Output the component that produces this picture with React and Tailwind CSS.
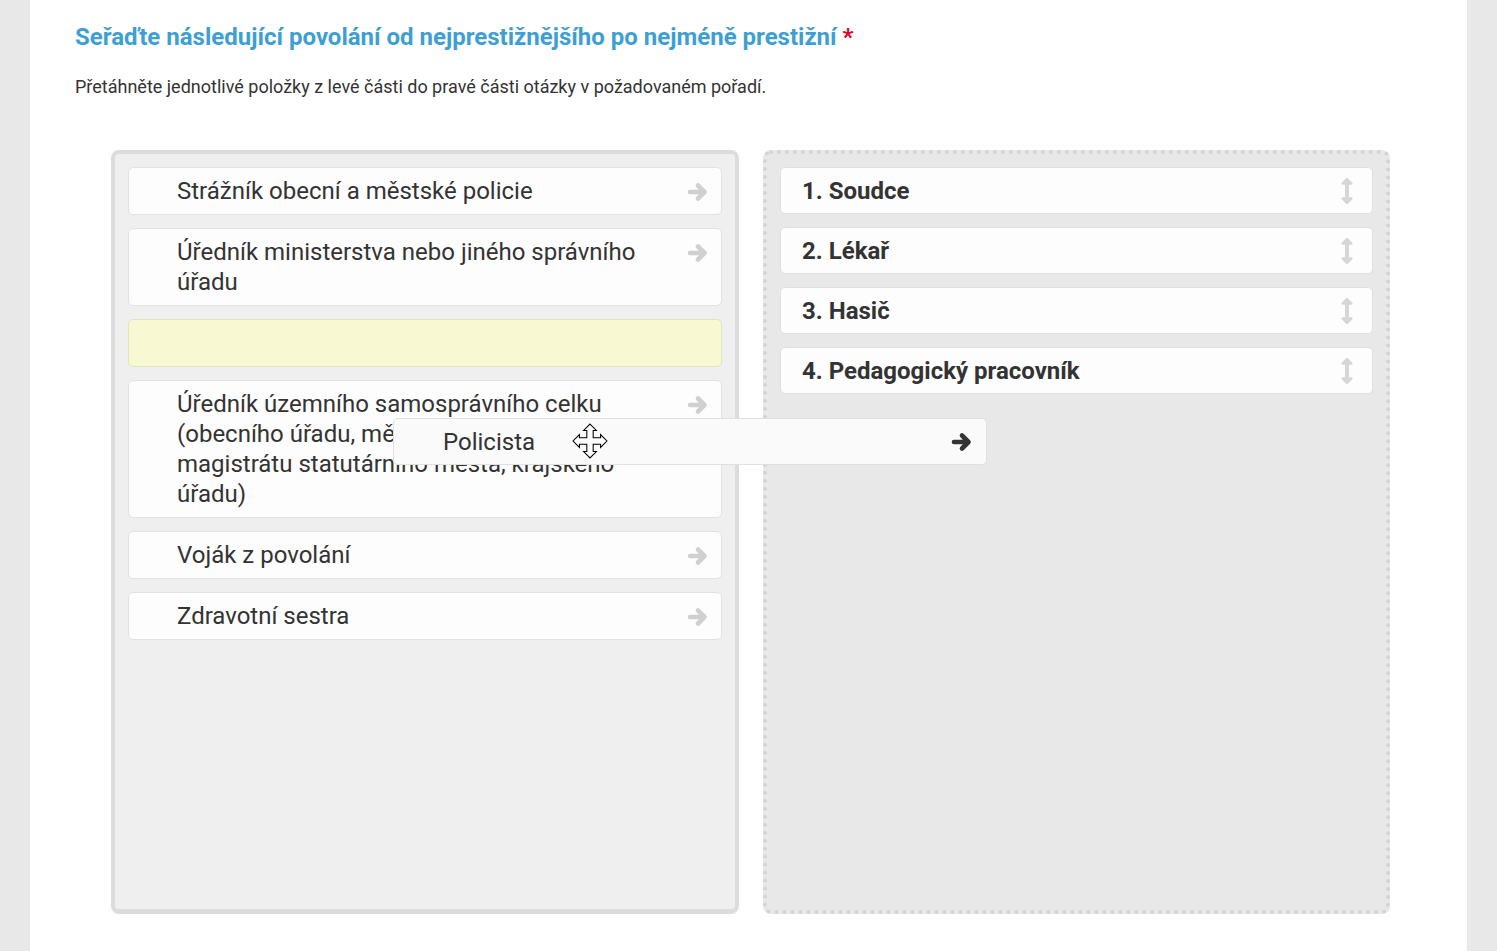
import React from 'react'
import { FaArrowsAltV } from 'react-icons/fa'

const leftItems = [
  'Strážník obecní a městské policie',
  'Úředník ministerstva nebo jiného správního úřadu',
  null,
  'Úředník územního samosprávního celku (obecního úřadu, městského úřadu, magistrátu statutárního města, krajského úřadu)',
  'Voják z povolání',
  'Zdravotní sestra',
]

const rightItems = ['1. Soudce', '2. Lékař', '3. Hasič', '4. Pedagogický pracovník']

function Arrow({ className }) {
  return (
    <svg width="22" height="20" viewBox="0 0 22 20" className={className}>
      <path d="M3 10 H17 M11 3.5 L17.5 10 L11 16.5" fill="none" stroke="currentColor" strokeWidth="4.6" strokeLinecap="round" strokeLinejoin="round" />
    </svg>
  )
}

function MoveCursor() {
  return (
    <svg width="36" height="36" viewBox="0 0 34 34" className="absolute left-[572px] top-[423px]">
      <path
        d="M17 1 L23 7 L20 7 L20 14 L27 14 L27 11 L33 17 L27 23 L27 20 L20 20 L20 27 L23 27 L17 33 L11 27 L14 27 L14 20 L7 20 L7 23 L1 17 L7 11 L7 14 L14 14 L14 7 L11 7 Z"
        fill="#fff"
        stroke="#000"
        strokeWidth="1"
      />
    </svg>
  )
}

function App() {
  return (
    <div className="relative min-h-screen bg-[#e8e8e8] font-['Roboto',sans-serif]">
      <div className="relative mx-[30px] min-h-[951px] bg-white px-[45px] pt-[21px]">
        <h1 className="text-[24px] font-bold leading-[32px] text-[#3d9fd3]">
          Seřaďte následující povolání od nejprestižnějšího po nejméně prestižní{' '}
          <span className="text-[#e4002b]">*</span>
        </h1>
        <p className="mt-[23px] text-[18px] leading-[22px] text-[#333]">
          Přetáhněte jednotlivé položky z levé části do pravé části otázky v požadovaném pořadí.
        </p>

        <div className="mt-[52px] ml-[36px] flex gap-[24px]">
          {/* source list */}
          <div className="flex h-[764px] w-[628px] flex-col gap-[13px] rounded-[8px] border-4 border-b-[5px] border-[#dcdcdc] bg-[#efefef] p-[13px]">
            {leftItems.map((text, i) =>
              text ? (
                <div
                  key={i}
                  className="flex items-start justify-between rounded-[5px] border border-[#e2e2e2] bg-[#fdfdfd] py-2 pl-[48px] pr-[12px] text-[24px] leading-[30px] text-[#333]"
                >
                  <span className="pr-8">{text}</span>
                  <Arrow className="mt-[6px] shrink-0 text-[#d0d0d0]" />
                </div>
              ) : (
                <div key={i} className="h-[48px] rounded-[5px] border border-[#e3e3c0] bg-[#f8f8d2]" />
              )
            )}
          </div>

          {/* ordered list */}
          <div className="flex h-[764px] w-[627px] flex-col gap-[13px] rounded-[8px] border-4 border-dotted border-[#d4d4d4] bg-[#e8e8e8] p-[13px]">
            {rightItems.map((text) => (
              <div
                key={text}
                className="flex items-center justify-between rounded-[5px] border border-[#e0e0e0] bg-[#fdfdfd] py-[7.5px] pl-[21px] pr-[12px] text-[24px] font-bold leading-[30px] text-[#333]"
              >
                <span>{text}</span>
                <FaArrowsAltV className="text-[26px] text-[#d6d6d6]" />
              </div>
            ))}
          </div>
        </div>

        {/* item being dragged */}
        <div className="absolute left-[363px] top-[418px] flex h-[47px] w-[594px] items-center justify-between rounded-[5px] border border-[#e0e0e0] bg-[#fafafa] pl-[49px] pr-[13px] text-[24px] leading-[30px] text-[#333]">
          <span>Policista</span>
          <Arrow className="text-[#333]" />
        </div>
      </div>
      <MoveCursor />
    </div>
  )
}

export default App
